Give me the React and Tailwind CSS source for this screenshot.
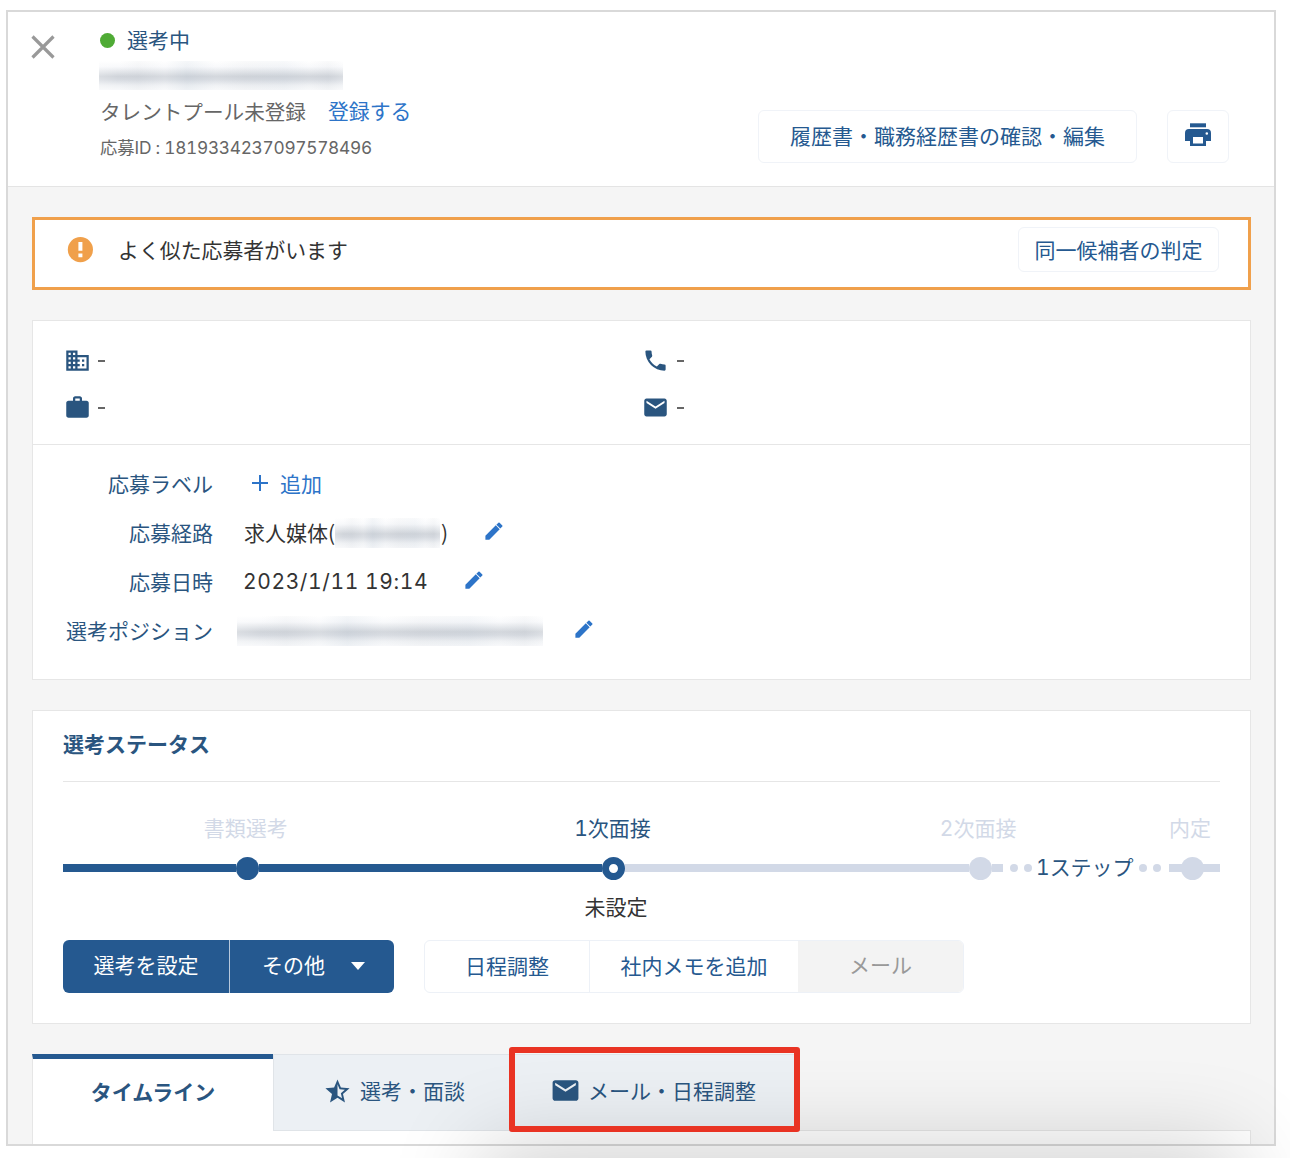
import React from "react";
import { MdBusiness, MdWork, MdEmail } from "react-icons/md";

function Redacted({ className }) {
  return (
    <span className={`block overflow-hidden bg-[linear-gradient(to_bottom,#ffffff_0%,#f8f9fb_20%,#e2e5e9_38%,#d0d4da_53%,#d6dae0_64%,#eff1f4_84%,#f8f9fb_100%)] ${className}`}>
      <span className="block h-full bg-[linear-gradient(90deg,#ffffff33_0%,#ffffff00_8%,#b4bac212_16%,#ffffff26_27%,#a9bbcc1f_36%,#ffffff14_48%,#b4bac212_60%,#a9bbcc14_76%,#ffffff0d_86%,#b4bac212_94%,#ffffff33_100%)]" />
    </span>
  );
}

function StarHalf({ className }) {
  return (
    <svg viewBox="0 0 24 24" className={className} fill="currentColor">
      <path d="M12 15.4V6.1L13.71 10.13L18.09 10.5L14.77 13.39L15.76 17.67M22 9.24L14.81 8.63L12 2L9.19 8.63L2 9.24L7.45 13.97L5.82 21L12 17.27L18.18 21L16.54 13.97L22 9.24Z" />
    </svg>
  );
}

function Phone({ className }) {
  return (
    <svg viewBox="0 0 24 24" className={className} fill="currentColor">
      <path d="M6.62 10.79C8.06 13.62 10.38 15.94 13.21 17.38L15.41 15.18C15.69 14.9 16.08 14.82 16.43 14.93C17.55 15.3 18.75 15.5 20 15.5A1 1 0 0 1 21 16.5V20A1 1 0 0 1 20 21A17 17 0 0 1 3 4A1 1 0 0 1 4 3H7.5A1 1 0 0 1 8.5 4C8.5 5.25 8.7 6.45 9.07 7.57C9.18 7.92 9.1 8.31 8.82 8.59L6.62 10.79Z" />
    </svg>
  );
}

function Printer({ className }) {
  return (
    <svg viewBox="0 0 26 24" className={className} fill="currentColor">
      <path d="M5 .3h16v4H5z" />
      <path fillRule="evenodd" d="M4 6h18a4 4 0 0 1 4 4v8h-5v5H5v-5H0v-8a4 4 0 0 1 4-4ZM8 14v6.5h10V14ZM21.8 9.2a1.3 1.3 0 1 0 .01 2.6a1.3 1.3 0 1 0-.01-2.6Z" />
    </svg>
  );
}

function Pencil({ className }) {
  return (
    <svg viewBox="0 0 18 18" className={`h-[18px] w-[18px] shrink-0 text-[#2d74c8] ${className}`} fill="currentColor">
      <path d="M.4 17.7V13.7L10.8 3.3L14.7 7.2L4.3 17.7ZM11.4 2.7L13.4.7Q14 .1 14.6.7L17.3 3.4Q17.9 4 17.3 4.6L15.3 6.6Z" />
    </svg>
  );
}

const Num = ({ children, className = "" }) => <span className={`font-[Inter,sans-serif] tabular-nums ${className}`}>{children}</span>;

function Header() {
  return (
    <header className="flex h-[175px] border-b border-[#e4e4e4] bg-white">
      <svg viewBox="0 0 24 24" className="mt-[23px] ml-[23px] h-6 w-6 shrink-0" stroke="#999" strokeWidth="3.2">
        <path d="M1.5 1.5L22.5 22.5M22.5 1.5L1.5 22.5" />
      </svg>
      <div className="ml-[44px] w-[400px] shrink-0">
        <div className="mt-[10px] flex h-9 items-center text-[#2a557f]">
          <span className="mr-3 ml-px h-[15px] w-[15px] rounded-full bg-[#4fab35]" />
          選考中
        </div>
        <Redacted className="mt-[3px] h-[29px] w-[244px]" />
        <div className="mt-[3px] flex h-9 items-center text-[20.6px] text-[#666]">
          <span className="ml-px">タレントプール未登録</span>
          <span className="ml-[22px] text-[20.9px] text-[#2d74c8]">登録する</span>
        </div>
        <div className="ml-px flex h-[36px] items-center text-[17.3px] whitespace-pre text-[#666]">
          <span>応募<Num className="tracking-[-0.28px]">ID : 1819334237097578496</Num></span>
        </div>
      </div>
      <div className="mt-[98px] mr-[45px] ml-auto flex gap-[30px] text-[#255990]">
        <div className="flex h-[53px] w-[379px] items-center justify-center rounded-md border border-[#f0f3f8] pb-px">履歴書・職務経歴書の確認・編集</div>
        <div className="flex h-[53px] w-[62px] items-center justify-center rounded-md border border-[#f0f3f8] pb-[3px]">
          <Printer className="h-[24px] w-[26px]" />
        </div>
      </div>
    </header>
  );
}

function Alert() {
  return (
    <section className="flex h-[73px] border-[3px] border-[#f0a04b] bg-white pl-8">
      <svg viewBox="0 0 26 26" className="mt-[17px] h-[26px] w-[26px]">
        <circle cx="13.4" cy="12.7" r="12.6" fill="#f0a04b" />
        <path d="M11.4 5h4v8.8h-4zM11.4 16.6h4v3.6h-4z" fill="#fff" />
      </svg>
      <span className="mt-[14px] ml-[25px] text-[20.9px] leading-[30px] text-[#333]">よく似た応募者がいます</span>
      <div className="mt-[7px] mr-[29px] ml-auto flex h-[45px] w-[201px] items-center justify-center rounded-md border border-[#f0f3f8] text-[#255990]">同一候補者の判定</div>
    </section>
  );
}

function Contact({ icon: Icon, gap = "ml-[7px]" }) {
  return (
    <div className="flex h-[47px] items-center text-[#2a557f]">
      <Icon className="h-[27px] w-[27px]" />
      <span className={`${gap} h-[2px] w-[7px] bg-[#666]`} />
    </div>
  );
}

function Row({ label, children }) {
  return (
    <div className="flex h-[49px] items-center">
      <span className="mr-px w-[180px] text-right whitespace-nowrap text-[#2a557f]">{label}</span>
      {children}
    </div>
  );
}

function Profile() {
  return (
    <section className="mt-[30px] h-[360px] border border-[#e6e6e6] bg-white">
      <div className="grid h-[124px] grid-cols-[578px_1fr] content-start border-b border-[#e6e6e6] pt-4 pl-[31px]">
        <Contact icon={MdBusiness} />
        <Contact icon={Phone} gap="ml-[8px]" />
        <Contact icon={MdWork} />
        <Contact icon={MdEmail} gap="ml-[8px]" />
      </div>
      <div className="pt-[14px] text-[#333]">
        <Row label="応募ラベル">
          <svg viewBox="0 0 18 18" className="mb-[2px] ml-[37px] h-[18px] w-[18px]" stroke="#2d74c8" strokeWidth="2">
            <path d="M9 1V17M1 9H17" />
          </svg>
          <span className="ml-[11px] text-[#2d74c8]">追加</span>
        </Row>
        <Row label="応募経路">
          <span className="ml-[30px]">求人媒体(</span>
          <Redacted className="h-[30px] w-[105px]" />
          <span className="ml-px">)</span>
          <Pencil className="mb-[4px] ml-[37px]" />
        </Row>
        <Row label="応募日時">
          <span className="ml-[29px] w-[185px] font-[Inter,sans-serif] tracking-[0.6px] whitespace-nowrap tabular-nums">2023/1/11 19:14</span>
          <Pencil className="mb-[4px] ml-[37px]" />
        </Row>
        <Row label="選考ポジション">
          <Redacted className="ml-[23px] h-[30px] w-[306px]" />
          <Pencil className="mb-[4px] ml-[32px]" />
        </Row>
      </div>
    </section>
  );
}

function Dot({ className = "" }) {
  return <span className={`h-2 w-2 shrink-0 rounded-full bg-[#d2d9e7] ${className}`} />;
}

function Status() {
  return (
    <section className="mt-[30px] h-[314px] border border-[#e6e6e6] bg-white px-[30px]">
      <h2 className="h-[71px] border-b border-[#e6e6e6] pt-[16px] leading-8 font-bold text-[#2a557f]">選考ステータス</h2>
      <div className="mt-[30px] flex h-[32px] items-center text-[#d2d9e7]">
        <span className="w-[366px] text-center">書類選考</span>
        <span className="w-[368px] text-center text-[#2a557f]"><Num>1</Num>次面接</span>
        <span className="w-[364px] text-center"><Num>2</Num>次面接</span>
        <span className="w-[60px] shrink-0 text-center">内定</span>
      </div>
      <div className="mt-[12px] flex h-[24px] items-center">
        <span className="h-2 w-[173px] bg-[#255990]" />
        <span className="h-[23px] w-[23px] rounded-full bg-[#255990]" />
        <span className="h-2 w-[343px] bg-[#255990]" />
        <span className="h-[23px] w-[23px] rounded-full border-[7.5px] border-[#255990] bg-white" />
        <span className="h-2 w-[344px] bg-[#d2d9e7]" />
        <span className="h-[23px] w-[23px] rounded-full bg-[#d2d9e7]" />
        <span className="h-2 w-[11px] bg-[#d2d9e7]" />
        <Dot className="ml-[7px]" />
        <Dot className="ml-[6px]" />
        <span className="ml-[4px] w-[103px] pb-px whitespace-nowrap text-[#2a557f]"><Num>1</Num>ステップ</span>
        <Dot />
        <Dot className="ml-[6px]" />
        <span className="ml-[8px] h-2 w-[13px] bg-[#d2d9e7]" />
        <span className="-ml-px h-[23px] w-[23px] rounded-full bg-[#d2d9e7]" />
        <span className="-ml-px h-2 flex-1 bg-[#d2d9e7]" />
      </div>
      <div className="mt-[10px] ml-[368px] h-[32px] w-[370px] text-center leading-[32px] text-[#333]">未設定</div>
      <div className="mt-[18px] flex h-[53px]">
        <div className="flex w-[331px] items-center overflow-hidden rounded-md bg-[#255990] text-white">
          <span className="w-[166px] pb-[3px] text-center">選考を設定</span>
          <span className="h-full w-px bg-[#b8c9dc]" />
          <span className="ml-[32px] pb-[3px]">その他</span>
          <span className="mb-px ml-[26px] border-x-[7.5px] border-t-[8px] border-x-transparent border-t-white" />
        </div>
        <div className="ml-[30px] flex w-[540px] overflow-hidden rounded-md border border-[#edf1f7] leading-[49px] text-[#255990]">
          <span className="w-[165px] border-r border-[#edf1f7] text-center">日程調整</span>
          <span className="w-[208px] text-center">社内メモを追加</span>
          <span className="flex-1 bg-[#f3f3f3] text-center leading-[47px] text-[#999]">メール</span>
        </div>
      </div>
    </section>
  );
}

function Tabs() {
  return (
    <section className="mt-[30px]">
      <div className="flex h-[77px] text-[#2a557f]">
        <div className="w-[241px] border-t-[5px] border-l border-t-[#255990] border-l-[#e6e6e6] bg-white text-center leading-[65px] font-bold">タイムライン</div>
        <div className="flex w-[240px] items-center border border-[#e0e4e8] bg-[#ecf0f4] pb-[3px] pl-[49px]">
          <StarHalf className="h-[29px] w-[29px]" />
          <span className="ml-2">選考・面談</span>
        </div>
        <div className="flex w-[286px] items-center border-y border-[#e0e4e8] bg-[#ecf0f4] pb-[3px] pl-[37px]">
          <MdEmail className="mb-px h-[31px] w-[31px]" />
          <span className="ml-[7px]">メール・日程調整</span>
        </div>
        <div className="flex-1 border-b border-[#e6e6e6]" />
      </div>
      <div className="h-[15px] border-x border-[#e6e6e6] bg-white" />
    </section>
  );
}

export default function App() {
  return (
    <div className="relative h-[1158px] w-[1290px] overflow-hidden bg-white pt-[10px] pl-[6px] font-['Noto_Sans_CJK_JP',sans-serif] text-[21px]">
      <main className="h-[1136px] w-[1270px] overflow-hidden border-2 border-[#d9d9d9] bg-[#f5f5f5]">
        <Header />
        <div className="pt-[30px] pr-[23px] pl-[24px]">
          <Alert />
          <Profile />
          <Status />
          <Tabs />
        </div>
      </main>
      <div className="pointer-events-none absolute top-[1178px] left-[510px] h-[100px] w-[700px] shadow-[0_0_90px_30px_rgba(0,0,0,0.19)]" />
      <div className="pointer-events-none absolute top-[1047px] left-[509px] h-[85px] w-[291px] rounded-[3px] border-[6px] border-[#e93323]" />
    </div>
  );
}
